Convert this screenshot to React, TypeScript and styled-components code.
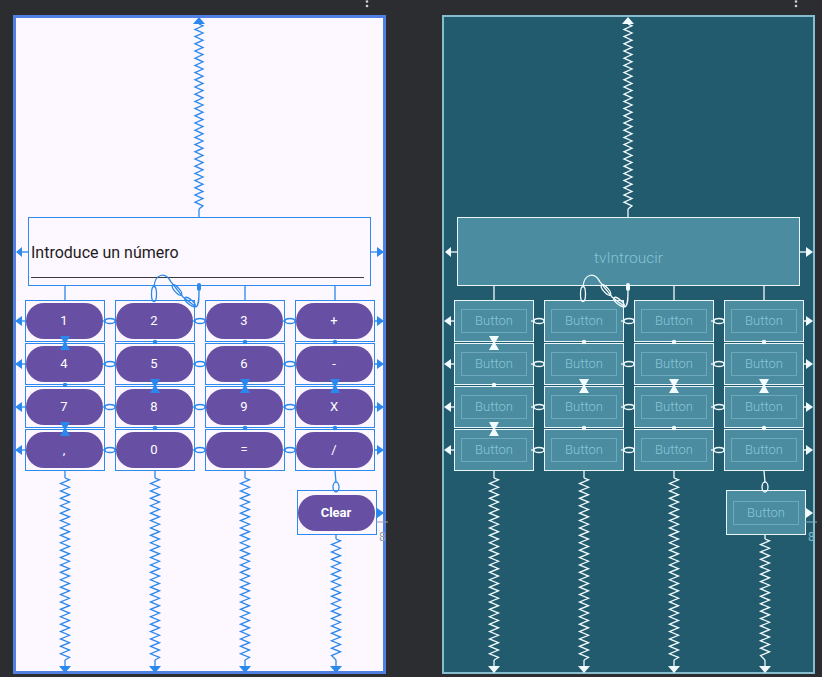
import React from 'react';
import styled, { createGlobalStyle, css } from 'styled-components';

type Mode = 'design' | 'blueprint';

const C = {
  design: { bg: '#fdf7ff', frame: '#4f80e2', line: '#2a88ee', cell: 'transparent', cellBorder: '#2f8aee', marker: '#9e9e9e' },
  blueprint: { bg: '#235b6e', frame: '#86bdcc', line: '#f2fbfd', cell: '#4b8ca1', cellBorder: '#eaf6f9', marker: '#7cb8c8' },
};

const Global = createGlobalStyle`
  html, body { margin: 0; padding: 0; background: #2b2d30; }
  body { font-family: Roboto, "Noto Sans", sans-serif; }
`;

const Page = styled.div`
  display: flex;
  gap: 56px;
  padding-left: 13px;
  height: 677px;
  overflow: hidden;
`;

const Column = styled.div`
  width: 373px;
  display: flex;
  flex-direction: column;
`;

const TopBar = styled.div`
  height: 15px;
  display: flex;
  justify-content: flex-end;
  padding-right: 17px;
`;

const Frame = styled.div<{ $mode: Mode }>`
  position: relative;
  height: 659px;
  box-sizing: border-box;
  background: ${(p) => C[p.$mode].bg};
  box-shadow: inset 0 0 0 ${(p) => (p.$mode === 'design' ? 3 : 2)}px ${(p) => C[p.$mode].frame};
`;

const FieldBox = styled.div<{ $mode: Mode }>`
  position: absolute;
  left: 15px;
  top: 202px;
  width: 343px;
  height: 69px;
  box-sizing: border-box;
  border: 1px solid ${(p) => C[p.$mode].cellBorder};
  background: ${(p) => C[p.$mode].cell};
  display: flex;
  flex-direction: column;
  ${(p) =>
    p.$mode === 'design'
      ? css`
          justify-content: flex-end;
          padding: 0 6px 7px 2px;
        `
      : css`
          justify-content: center;
          align-items: center;
          padding-top: 13px;
        `}
`;

const EditText = styled.div`
  font: 400 16px/19px Roboto, sans-serif;
  color: #1d1b20;
  padding-bottom: 15px;
  border-bottom: 1px solid #3a3a3f;
`;

const BlueprintLabel = styled.div`
  font: 300 15.5px/19px Roboto, sans-serif;
  color: #86c3d4;
`;

const KeyGrid = styled.div`
  position: absolute;
  left: 12px;
  top: 285px;
  display: grid;
  grid-template-columns: repeat(4, 80px);
  grid-auto-rows: 42px;
  column-gap: 10px;
  row-gap: 1px;
`;

const Cell = styled.div<{ $mode: Mode }>`
  box-sizing: border-box;
  border: 1px solid ${(p) => C[p.$mode].cellBorder};
  background: ${(p) => C[p.$mode].cell};
  display: flex;
  align-items: center;
  justify-content: center;
`;

const ClearSlot = styled(Cell)`
  position: absolute;
  left: 284px;
  top: 475px;
  width: 80px;
  height: 45px;
`;

const Pill = styled.div<{ $bold?: boolean }>`
  flex: none;
  width: 77px;
  height: 36px;
  margin-left: -2px;
  border-radius: 18px;
  background: #6750a4;
  color: #ffffff;
  font: ${(p) => (p.$bold ? 700 : 400)} 13px/16px Roboto, sans-serif;
  display: flex;
  align-items: center;
  justify-content: center;
`;

const BpButton = styled.div`
  flex: none;
  width: 66px;
  height: 24px;
  box-sizing: border-box;
  border: 1px solid #6ea9bb;
  color: #8ac6d7;
  font: 300 13px/16px Roboto, sans-serif;
  display: flex;
  align-items: center;
  justify-content: center;
`;

const Overlay = styled.svg`
  position: absolute;
  left: 0;
  top: 0;
  width: 100%;
  height: 100%;
  overflow: visible;
  pointer-events: none;
`;

const keys = ['1', '2', '3', '+', '4', '5', '6', '-', '7', '8', '9', 'X', ',', '0', '=', '/'];

function spring(x: number, y1: number, y2: number, amp = 4, half = 3.6) {
  let d = `M${x} ${y1}`;
  const n = Math.floor((y2 - y1) / half);
  for (let k = 1; k <= n; k++) {
    const yy = y1 + k * half - half / 2;
    d += ` L${x + (k % 2 ? amp : -amp)} ${yy.toFixed(2)}`;
  }
  d += ` L${x} ${y2}`;
  return d;
}

const colX = [52, 142, 232, 322];
const rowY = [306, 349, 392, 435];
const bounds = [328, 371, 414];

function Hourglass({ x, y, c }: { x: number; y: number; c: string }) {
  return (
    <polygon
      points={`${x - 5},${y - 7} ${x + 5},${y - 7} ${x + 1},${y} ${x + 5},${y + 7} ${x - 5},${y + 7} ${x - 1},${y}`}
      fill={c}
    />
  );
}

function Constraints({ mode }: { mode: Mode }) {
  const c = C[mode].line;
  const sw = 1.3;
  return (
    <Overlay>
      <g stroke={c} strokeWidth={sw} fill="none">
        <path d={spring(186, 9, 194)} />
        <line x1={186} y1={194} x2={186} y2={202} />
        <line x1={9} y1={237} x2={15} y2={237} />
        <line x1={358} y1={237} x2={364} y2={237} />
        {[0, 2, 3].map((i) => (
          <line key={i} x1={colX[i]} y1={271} x2={colX[i]} y2={285} />
        ))}
        <ellipse cx={141} cy={279} rx={2.5} ry={7.5} />
        <path d="M141 272 C142 259, 152 256, 158 267 L170 282 L183 292 C186 290, 186 284, 186 276" />
        <ellipse cx={164} cy={275} rx={6.5} ry={2.4} transform="rotate(48 164 275)" />
        <ellipse cx={177} cy={287} rx={6.5} ry={2.4} transform="rotate(40 177 287)" />
        {rowY.map((y) => (
          <g key={y}>
            <line x1={9} y1={y} x2={12} y2={y} />
            <line x1={362} y1={y} x2={364} y2={y} />
            {[97, 187, 277].map((x) => (
              <g key={x}>
                <line x1={x - 8} y1={y} x2={x - 5} y2={y} />
                <ellipse cx={x} cy={y} rx={5} ry={2.5} />
              </g>
            ))}
          </g>
        ))}
        {[0, 1, 2].map((i) => (
          <g key={i}>
            <line x1={colX[i]} y1={456} x2={colX[i]} y2={463} />
            <path d={spring(colX[i], 463, 645, 4.5, 3.7)} />
            <line x1={colX[i]} y1={645} x2={colX[i]} y2={651} />
          </g>
        ))}
        <line x1={322} y1={456} x2={323} y2={467} />
        <ellipse cx={323} cy={472} rx={3} ry={5} />
        <line x1={323} y1={520} x2={323} y2={524} />
        <path d={spring(323, 524, 645, 4.5, 3.7)} />
        <line x1={323} y1={645} x2={323} y2={651} />
        <line x1={364} y1={498} x2={365} y2={498} />
      </g>
      <g fill={c}>
        <polygon points="180,9 192,9 186,2" />
        <polygon points="3,237 9,232 9,242" />
        <polygon points="364,232 364,242 371,237" />
        <rect x={184} y={268} width={4} height={8} rx={2} />
        {rowY.map((y) => (
          <g key={y}>
            <polygon points={`2,${y} 9,${y - 5} 9,${y + 5}`} />
            <polygon points={`364,${y - 5} 364,${y + 5} 371,${y}`} />
          </g>
        ))}
        {colX.map((x, ci) =>
          bounds.map((b, bi) => {
            const hg = ci === 0 ? bi !== 1 : bi === 1;
            return hg ? (
              <Hourglass key={`${ci}-${bi}`} x={x} y={b} c={c} />
            ) : (
              <circle key={`${ci}-${bi}`} cx={x} cy={b - 1} r={2.2} />
            );
          })
        )}
        {[...colX.slice(0, 3), 323].map((x) => (
          <polygon key={x} points={`${x - 6},651 ${x + 6},651 ${x},658`} />
        ))}
        <polygon points="364,493 364,503 371,498" />
      </g>
      <line x1={363} y1={507} x2={375} y2={507} stroke={C[mode].marker} strokeWidth={1} />
      <text x={366} y={526} fill={C[mode].marker} fontSize={12} fontFamily="Roboto, sans-serif">
        8
      </text>
    </Overlay>
  );
}

const Dots = () => (
  <svg width="4" height="15">
    <circle cx="2" cy="1.5" r="1.3" fill="#cfd1d4" />
    <circle cx="2" cy="6" r="1.3" fill="#cfd1d4" />
  </svg>
);

function Screen({ mode }: { mode: Mode }) {
  return (
    <Column>
      <TopBar>
        <Dots />
      </TopBar>
      <Frame $mode={mode}>
        <FieldBox $mode={mode}>
          {mode === 'design' ? <EditText>Introduce un número</EditText> : <BlueprintLabel>tvIntroucir</BlueprintLabel>}
        </FieldBox>
        <KeyGrid>
          {keys.map((k) => (
            <Cell key={k} $mode={mode}>
              {mode === 'design' ? <Pill>{k}</Pill> : <BpButton>Button</BpButton>}
            </Cell>
          ))}
        </KeyGrid>
        <ClearSlot $mode={mode}>
          {mode === 'design' ? <Pill $bold>Clear</Pill> : <BpButton>Button</BpButton>}
        </ClearSlot>
        <Constraints mode={mode} />
      </Frame>
    </Column>
  );
}

export default function App() {
  return (
    <>
      <Global />
      <Page>
        <Screen mode="design" />
        <Screen mode="blueprint" />
      </Page>
    </>
  );
}
